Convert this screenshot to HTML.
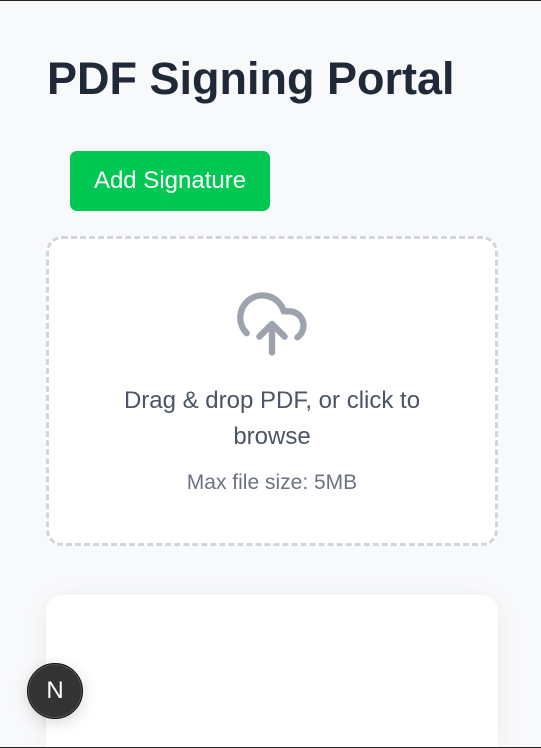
<!DOCTYPE html>
<html><head><style>
html,body{margin:0;padding:0;overflow:hidden;width:541px;height:748px}
.w{width:541px;height:748px;background:#f8f9fb;font-family:"Liberation Sans",sans-serif;position:relative;overflow:hidden;box-sizing:border-box;border-top:1px solid #222;border-bottom:1px solid #222}
h1{position:absolute;left:47px;top:52px;margin:0;font-size:45px;font-weight:bold;color:#1f2937}
.btn{position:absolute;left:70px;top:150px;width:200px;height:60px;background:#00c853;border-radius:7px;color:#fff;font-size:24px;display:flex;align-items:center;justify-content:center}
.drop{position:absolute;left:46px;top:235px;width:452px;height:310px;box-sizing:border-box;border:3px dashed #d1d5db;border-radius:16px;background:#fff}
.t1{position:absolute;left:0;width:100%;text-align:center;color:#4b5563;font-size:24px;line-height:36px;top:144px}
.t2{position:absolute;left:0;width:100%;text-align:center;color:#6b7280;font-size:21px;top:232px}
.card{position:absolute;left:46px;top:594px;width:452px;height:152px;background:#fff;border-radius:16px 16px 0 0;box-shadow:0 4px 24px rgba(0,0,0,.06)}
.n{position:absolute;left:27px;top:662px;width:54px;height:54px;border-radius:50%;background:#333;border:1px solid #111;box-shadow:0 0 0 1px #555 inset,0 4px 16px rgba(0,0,0,.15);color:#fff;font-size:24px;display:flex;align-items:center;justify-content:center}
</style></head><body><div class="w">
<h1>PDF Signing Portal</h1>
<div class="btn">Add Signature</div>
<div class="drop">
<svg style="position:absolute;left:185px;top:47px" width="76" height="76" viewBox="0 0 24 24" fill="none" stroke="#9ca3af" stroke-width="2" stroke-linecap="round" stroke-linejoin="round"><path d="M4 14.9A7 7 0 1 1 15.7 8h1.8a4.5 4.5 0 0 1 2.5 8.2"/><path d="M12 12v9"/><path d="m16 16-4-4-4 4"/></svg>
<div class="t1">Drag &amp; drop PDF, or click to<br>browse</div>
<div class="t2">Max file size: 5MB</div>
</div>
<div class="card"></div>
<div class="n">N</div>
</div></body></html>
